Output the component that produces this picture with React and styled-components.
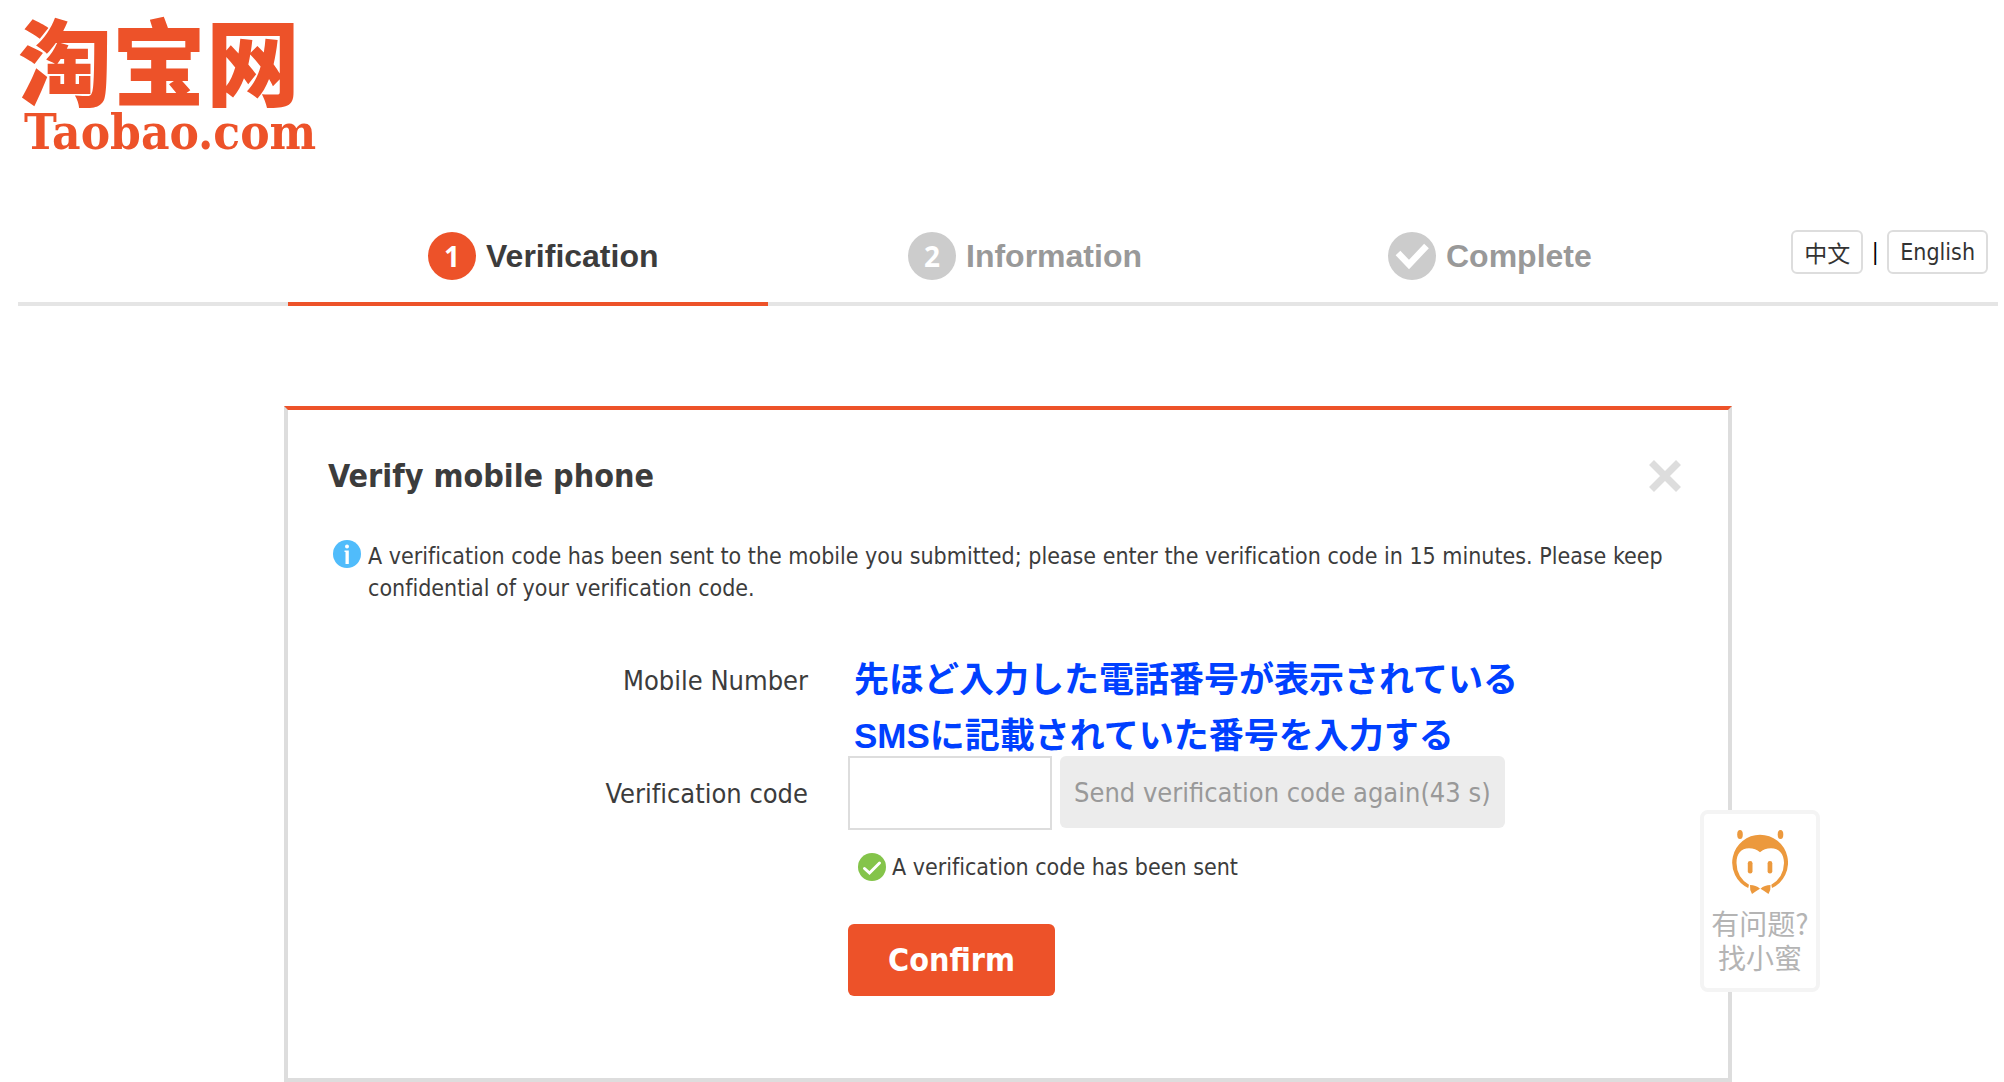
import React, { useState } from 'react';
import styled, { createGlobalStyle } from 'styled-components';

const GlobalStyle = createGlobalStyle`
    * {
        box-sizing: border-box;
    }
    body {
        margin: 0;
        background: #fff;
        color: #3c3c3c;
        font-family: "DejaVu Sans Condensed", "Noto Sans", "Noto Sans CJK SC", sans-serif;
        font-size: 23px;
        font-variant-ligatures: none;
    }
    button, input {
        font-family: inherit;
    }
`

const Page = styled.div`
    padding: 0 6px 0 18px;
`

const Header = styled.header`
    height: 210px;
    padding-top: 14px;
`
const Logo = styled.a`
    display: inline-flex;
    flex-direction: column;
    color: #ed5229;
    text-decoration: none;
`
const LogoChinese = styled.span`
    font-family: "Noto Sans CJK SC", sans-serif;
    font-size: 94px;
    font-weight: 900;
    line-height: 88px;
`
const LogoLatin = styled.span`
    padding-left: 6px;
    font-family: "DejaVu Serif Condensed", serif;
    font-size: 49px;
    font-weight: bold;
    line-height: 60px;
`

const Nav = styled.nav`
    display: grid;
    grid-template-columns: 1fr minmax(0, 1440px) 1fr;
`
const NavSide = styled.div`
    display: flex;
    justify-content: flex-end;
    align-items: flex-start;
    padding: 20px 10px 0 0;
    border-bottom: 4px solid #e5e5e5;
`
const Steps = styled.ol`
    display: flex;
    margin: 0;
    padding: 0;
    list-style: none;
`
const Step = styled.li`
    flex: 1;
    display: flex;
    align-items: center;
    gap: 10px;
    padding: 22px 0 22px 140px;
    border-bottom: 4px solid ${props => props.$active ? '#ed5229' : '#e5e5e5'};
    color: ${props => props.$active ? '#3c3c3c' : '#999'};
    font-family: "Liberation Sans", sans-serif;
    font-size: 32px;
    font-weight: bold;
`
const StepBadge = styled.span`
    display: flex;
    align-items: center;
    justify-content: center;
    width: 48px;
    height: 48px;
    border-radius: 50%;
    background: ${props => props.$active ? '#ed5229' : '#ccc'};
    color: #fff;
    font-family: "Noto Sans", sans-serif;
    font-size: 28px;
`
const Languages = styled.div`
    display: flex;
    align-items: center;
    color: #000;
`
const Divider = styled.span`
    width: 24px;
    text-align: center;
`
const LanguageButton = styled.button`
    height: 44px;
    padding: 0 11px;
    border: 2px solid #ddd;
    border-radius: 6px;
    background: #fff;
    color: #333;
    font-size: 23px;
    white-space: nowrap;
`

const Panel = styled.main`
    max-width: 1448px;
    margin: 100px auto 0;
    padding: 44px 40px 82px;
    border: 4px solid #ddd;
    border-top-color: #ed5229;
`
const PanelHeader = styled.div`
    display: flex;
    justify-content: space-between;
    align-items: center;
    padding-right: 7px;
`
const Title = styled.h1`
    margin: 0;
    font-size: 32px;
    line-height: 44px;
`
const CloseButton = styled.button`
    display: flex;
    padding: 0;
    border: 0;
    background: none;
`
const Info = styled.div`
    display: flex;
    gap: 7px;
    margin-top: 42px;
    padding-left: 5px;
    line-height: 32px;
    svg {
        flex: none;
    }
`
const InfoText = styled.p`
    margin: 0;
`

const Form = styled.form`
    display: grid;
    grid-template-columns: 480px 1fr;
    column-gap: 40px;
    margin-top: 56px;
`
const Label = styled.label`
    align-self: center;
    text-align: right;
    font-size: 27px;
`
const Field = styled.div`
    grid-column: 2;
    display: flex;
    align-items: flex-start;
    gap: 8px;
`
const Note = styled.strong`
    grid-column: 2;
    padding-left: 6px;
    color: #0040ff;
    font-family: "Liberation Sans", "Noto Sans CJK JP", sans-serif;
    font-size: 35px;
    line-height: 40px;
    & + & {
        margin-top: 16px;
    }
`
const CodeInput = styled.input`
    width: 204px;
    height: 74px;
    padding: 0 12px;
    border: 2px solid #ddd;
    font-size: 27px;
`
const ResendButton = styled.button`
    height: 72px;
    padding: 0 14px;
    border: 0;
    border-radius: 6px;
    background: #ececec;
    color: #999;
    font-size: 27px;
    white-space: nowrap;
`
const Status = styled.p`
    grid-column: 2;
    display: flex;
    align-items: center;
    gap: 6px;
    margin: 20px 0 0;
    padding-left: 10px;
    line-height: 34px;
`
const ConfirmButton = styled.button`
    grid-column: 2;
    justify-self: start;
    height: 72px;
    margin-top: 40px;
    padding: 0 40px;
    border: 0;
    border-radius: 6px;
    background: #ed5229;
    color: #fff;
    font-size: 32px;
    font-weight: bold;
`

// stays over the page while it scrolls
const Helper = styled.a`
    position: fixed;
    top: 810px;
    right: 184px;
    display: flex;
    flex-direction: column;
    align-items: center;
    width: 120px;
    height: 182px;
    padding-top: 16px;
    border: 4px solid #f4f4f4;
    border-radius: 8px;
    background: #fff;
    color: #b4b4b4;
    font-family: "Noto Sans CJK SC", sans-serif;
    font-size: 28px;
    line-height: 34px;
    text-decoration: none;
    white-space: nowrap;
    svg {
        margin-bottom: 12px;
    }
`

const CheckIcon = () => (
    <svg width="48" height="48" viewBox="0 0 48 48" aria-hidden="true">
        <path d="M10 21 L21 32.500 L38.500 14" fill="none" stroke="#fff" strokeWidth="6.500" />
    </svg>
)

const CloseIcon = () => (
    <svg width="32" height="32" viewBox="0 0 32 32" aria-hidden="true">
        <path d="M2.500 2.500 L29.500 29.500 M29.500 2.500 L2.500 29.500" stroke="#ddd" strokeWidth="7" />
    </svg>
)

const InfoIcon = () => (
    <svg width="28" height="28" viewBox="0 0 28 28" aria-hidden="true">
        <circle cx="14" cy="14" r="14" fill="#50bcfb" />
        <circle cx="14" cy="6.500" r="2" fill="#fff" />
        <path d="M11.500 10.500 H15.800 V24 H12.500 V12 H11.500 Z" fill="#fff" />
    </svg>
)

const SentIcon = () => (
    <svg width="28" height="28" viewBox="0 0 28 28" aria-hidden="true">
        <circle cx="14" cy="14" r="14" fill="#84c44a" />
        <path d="M6.500 15.500 L11.500 20 L21.500 10" fill="none" stroke="#fff" strokeWidth="3" strokeLinecap="round" />
    </svg>
)

const BeeIcon = () => (
    <svg width="56" height="64" viewBox="0 0 56 64" aria-hidden="true">
        <g fill="#ec993d">
            <ellipse cx="8" cy="4.500" rx="2.800" ry="4.500" />
            <ellipse cx="48.500" cy="4.500" rx="2.800" ry="4.500" />
            <path d="M28 4.700 A28 28 0 0 0 16.200 58 L17 54.800 A26 26 0 0 1 4.500 33 C4.500 24 9 18.300 17 18.300 C21.500 18.300 25 19.500 28 22.300 C31 19.500 34.500 18.300 39 18.300 C47 18.300 52 24 52 33 A26 26 0 0 1 39.300 54.800 L40 58 A28 28 0 0 0 28 4.700 Z" />
            <rect x="15.800" y="31" width="4.700" height="12.500" rx="2.300" />
            <rect x="35.600" y="31" width="4.700" height="12.500" rx="2.300" />
            <path d="M18 55 Q24 55 28 58.700 Q24 61 20 64 Q17.500 60 18 55 Z" />
            <path d="M38.500 55 Q32.500 55 28.500 58.700 Q32.500 61 36.500 64 Q39 60 38.500 55 Z" />
        </g>
    </svg>
)

const steps = [
    { badge: '1', name: 'Verification' },
    { badge: '2', name: 'Information' },
    { badge: <CheckIcon />, name: 'Complete' },
];

const App = () => {
    const [code, setCode] = useState('');

    return (
        <Page>
            <GlobalStyle />
            <Header>
                <Logo href="#">
                    <LogoChinese>淘宝网</LogoChinese>
                    <LogoLatin>Taobao.com</LogoLatin>
                </Logo>
            </Header>
            <Nav>
                <NavSide />
                <Steps>
                    {steps.map((step, i) => (
                        <Step key={step.name} $active={i === 0}>
                            <StepBadge $active={i === 0}>{step.badge}</StepBadge>
                            {step.name}
                        </Step>
                    ))}
                </Steps>
                <NavSide>
                    <Languages>
                        <LanguageButton type="button">中文</LanguageButton>
                        <Divider>|</Divider>
                        <LanguageButton type="button">English</LanguageButton>
                    </Languages>
                </NavSide>
            </Nav>
            <Panel>
                <PanelHeader>
                    <Title>Verify mobile phone</Title>
                    <CloseButton type="button" aria-label="Close"><CloseIcon /></CloseButton>
                </PanelHeader>
                <Info>
                    <InfoIcon />
                    <InfoText>
                        A verification code has been sent to the mobile you submitted; please enter the
                        verification code in 15 minutes. Please keep confidential of your verification code.
                    </InfoText>
                </Info>
                <Form onSubmit={e => e.preventDefault()}>
                    <Label as="span">Mobile Number</Label>
                    <Note>先ほど入力した電話番号が表示されている</Note>
                    <Note>SMSに記載されていた番号を入力する</Note>
                    <Label htmlFor="code">Verification code</Label>
                    <Field>
                        <CodeInput id="code" value={code} onChange={e => setCode(e.target.value)} />
                        <ResendButton type="button">Send verification code again(43 s)</ResendButton>
                    </Field>
                    <Status><SentIcon />A verification code has been sent</Status>
                    <ConfirmButton type="submit">Confirm</ConfirmButton>
                </Form>
            </Panel>
            <Helper href="#">
                <BeeIcon />
                <span>有问题?</span>
                <span>找小蜜</span>
            </Helper>
        </Page>
    );
}

export default App;
